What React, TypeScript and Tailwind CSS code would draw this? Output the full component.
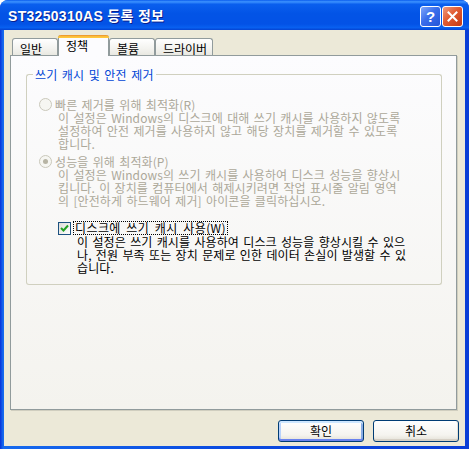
import React from 'react';

const kr = "font-['Noto_Sans_CJK_KR',sans-serif]";

const Tab: React.FC<{ label: string; w: string; active?: boolean }> = ({ label, w, active }) => {
  if (active) {
    return (
      <div
        className={`${w} h-[21px] -mb-[1px] relative z-10 border-x border-[#919B9C] rounded-t-[3px] bg-[#FCFCFE] flex flex-col`}
      >
        <div className="h-[3px] rounded-t-[3px] bg-[linear-gradient(to_bottom,#E68B2C,#FFC73C_60%,#FFC73C)] -mx-[1px]" />
        <div className="pl-[7px] pt-[1px] text-[12px] leading-[13px] text-black">{label}</div>
      </div>
    );
  }
  return (
    <div
      className={`${w} h-[17px] border-t border-x border-[#919B9C] rounded-t-[3px] bg-[linear-gradient(to_bottom,#FFFFFF,#F3F3EF_60%,#E9E8E1)] pl-[7px] pt-[3px] text-[12px] leading-[13px] text-black`}
    >
      {label}
    </div>
  );
};

const Radio: React.FC<{ checked?: boolean }> = ({ checked }) => (
  <div className="w-[13px] h-[13px] rounded-full border border-[#CAC8BB] bg-[#F6F6F2] flex items-center justify-center shrink-0">
    {checked && <div className="w-[5px] h-[5px] rounded-full bg-[#B7B4A4]" />}
  </div>
);

const Desc: React.FC<{ lines: string[]; dim?: boolean; indent: string }> = ({ lines, dim, indent }) => (
  <div className={`${indent} text-[12px] leading-[13px] tracking-[0.1px] [word-spacing:1.5px] ${dim ? 'text-[#ACA899]' : 'text-black'}`}>
    {lines.map((l) => (
      <div key={l} className="whitespace-nowrap">
        {l}
      </div>
    ))}
  </div>
);

const Button: React.FC<{ label: string; primary?: boolean }> = ({ label, primary }) => (
  <div
    className={`w-[86px] h-[22px] rounded-[3px] border border-[#003C74] bg-[linear-gradient(to_bottom,#FFFFFF,#F5F4EF_70%,#E3E0D6)] flex items-center justify-center text-[12px] text-black ${
      primary
        ? 'shadow-[inset_0_2px_0_#CEE7FF,inset_0_-2px_0_#6982EE,inset_2px_0_0_#B8D2FB,inset_-2px_0_0_#89ADE4]'
        : 'shadow-[inset_0_-2px_0_#D6D0C5,inset_-1px_0_0_#E3E0D6]'
    }`}
  >
    {label}
  </div>
);

export default function App() {
  return (
    <div className={`w-[469px] h-[449px] ${kr} bg-[linear-gradient(to_right,#0831D9,#166AEE_3px,#0A4AE0_50%,#0A3ED6)] rounded-t-[8px] flex flex-col overflow-hidden`}>
      {/* title bar */}
      <div className="h-[30px] shrink-0 flex items-center pl-[8px] pr-[6px] bg-[linear-gradient(to_bottom,#0A5CEE_0%,#3D93FF_6%,#0A5FEE_14%,#0354E6_45%,#0352E6_80%,#0860F0_92%,#0443D2_100%)]">
        <div className="flex-1 text-white font-bold text-[14px] leading-[16px] pt-[2px] tracking-[0.3px] font-['Liberation_Sans','Noto_Sans_CJK_KR',sans-serif] [text-shadow:1px_1px_0_#0A1E8C]">
          ST3250310AS 등록 정보
        </div>
        <div className="flex gap-[1px] pt-[3px]">
          <div className="w-[21px] h-[21px] rounded-[3px] border border-white bg-[linear-gradient(135deg,#7FA7FA,#3A6EEB_45%,#2355D8)] flex items-center justify-center text-white font-bold text-[15px] leading-none font-['Liberation_Sans',sans-serif]">
            ?
          </div>
          <div className="w-[21px] h-[21px] rounded-[3px] border border-white bg-[linear-gradient(135deg,#EE9B7F,#E15A31_45%,#C53A14)] flex items-center justify-center">
            <svg width="11" height="11" viewBox="0 0 11 11">
              <path d="M1.5 1.5 L9.5 9.5 M9.5 1.5 L1.5 9.5" stroke="white" strokeWidth="2" strokeLinecap="square" />
            </svg>
          </div>
        </div>
      </div>

      {/* client area */}
      <div className="flex-1 ml-[4px] mr-[4px] mb-[3px] bg-[#ECE9D8] flex flex-col">
        <div className="h-[25px] flex items-end pl-[8px]">
          <Tab label="일반" w="w-[46px]" />
          <Tab label="정책" w="w-[51px]" active />
          <Tab label="볼륨" w="w-[46px]" />
          <Tab label="드라이버" w="w-[58px]" />
        </div>

        <div className="ml-[6px] w-[447px] h-[355px] border border-[#919B9C] bg-[linear-gradient(to_bottom,#FCFCFE,#F4F3EE)] shadow-[1px_1px_0_#D0CEBF] flex flex-col">
          {/* group box */}
          <div className="mt-[12px] ml-[15px] w-[416px] flex flex-col">
            <div className="h-[13px] flex">
              <div className="w-[7px] h-[7px] self-end border-l border-t border-[#D0D0BF] rounded-tl-[3px]" />
              <div className="px-[2px] text-[12px] leading-[13px] text-[#0046D5] tracking-[0.2px] [word-spacing:1.5px]">
                쓰기 캐시 및 안전 제거
              </div>
              <div className="flex-1 h-[7px] self-end border-r border-t border-[#D0D0BF] rounded-tr-[3px]" />
            </div>

            <div className="h-[204px] border-x border-b border-[#D0D0BF] rounded-b-[3px] pt-[17px] pl-[12px] flex flex-col">
              <div className="flex items-center h-[13px]">
                <Radio />
                <span className="ml-[3px] text-[12px] leading-[13px] text-[#ACA899] tracking-[0.1px] [word-spacing:1.5px]">빠른 제거를 위해 최적화(R)</span>
              </div>
              <Desc
                dim
                indent="ml-[19px]"
                lines={[
                  '이 설정은 Windows의 디스크에 대해 쓰기 캐시를 사용하지 않도록',
                  '설정하여 안전 제거를 사용하지 않고 해당 장치를 제거할 수 있도록',
                  '합니다.',
                ]}
              />

              <div className="mt-[5px] flex items-center h-[13px]">
                <Radio checked />
                <span className="ml-[3px] text-[12px] leading-[13px] text-[#ACA899] tracking-[0.1px] [word-spacing:1.5px]">성능을 위해 최적화(P)</span>
              </div>
              <Desc
                dim
                indent="ml-[19px]"
                lines={[
                  '이 설정은 Windows의 쓰기 캐시를 사용하여 디스크 성능을 향상시',
                  '킵니다. 이 장치를 컴퓨터에서 해제시키려면 작업 표시줄 알림 영역',
                  '의 [안전하게 하드웨어 제거] 아이콘을 클릭하십시오.',
                ]}
              />

              <div className="mt-[14px] ml-[19px] flex items-center h-[14px]">
                <div className="w-[13px] h-[13px] border border-[#1C5180] bg-[linear-gradient(135deg,#DCDCD7,#FFFFFF)] flex items-center justify-center shrink-0">
                  <svg width="9" height="9" viewBox="0 0 9 9">
                    <path d="M1 4 L3.5 6.5 L8 1.5" stroke="#21A121" strokeWidth="2" fill="none" />
                  </svg>
                </div>
                <span className="ml-[2px] px-[1px] h-[14px] border border-dotted border-black text-[12px] leading-[12px] text-black tracking-[0.4px] [word-spacing:2.5px]">
                  디스크에 쓰기 캐시 사용(W)
                </span>
              </div>
              <Desc
                indent="ml-[38px]"
                lines={[
                  '이 설정은 쓰기 캐시를 사용하여 디스크 성능을 향상시킬 수 있으',
                  '나, 전원 부족 또는 장치 문제로 인한 데이터 손실이 발생할 수 있',
                  '습니다.',
                ]}
              />
            </div>
          </div>
        </div>

        <div className="mt-[10px] mr-[6px] flex justify-end gap-[9px]">
          <Button label="확인" primary />
          <Button label="취소" />
        </div>
      </div>
    </div>
  );
}
